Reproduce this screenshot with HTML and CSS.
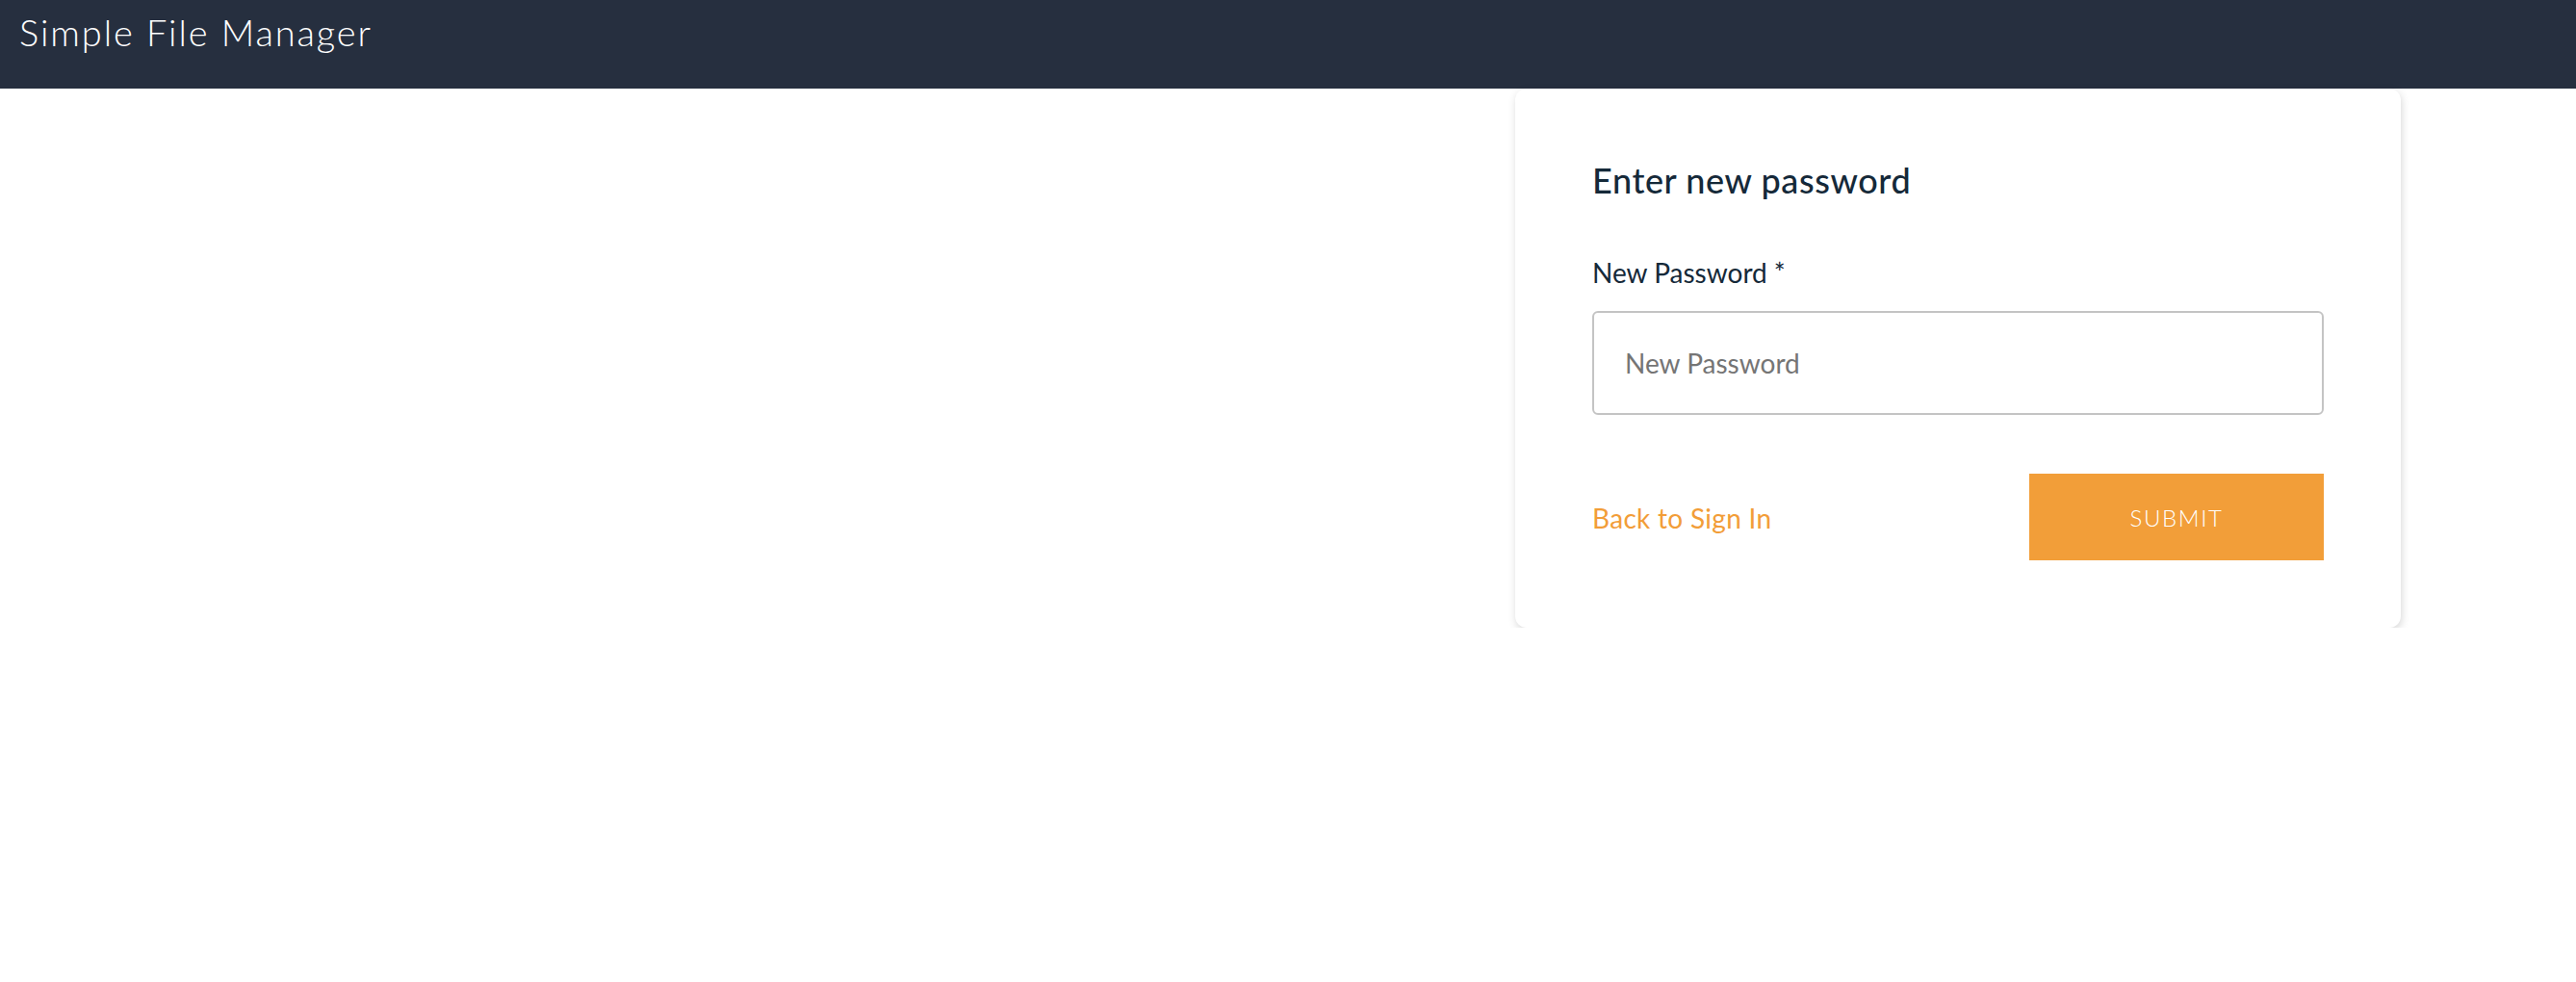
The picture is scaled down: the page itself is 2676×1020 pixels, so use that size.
FILE: index.html
```html
<!DOCTYPE html>
<html lang="en">
<head>
<meta charset="utf-8">
<title>Simple File Manager</title>
<link rel="stylesheet" href="styles.css">
</head>
<body>
<header class="topbar">
  <span class="brand">Simple File Manager</span>
</header>
<main class="main">
  <section class="card">
    <h1 class="card-title">Enter new password</h1>
    <form class="form">
      <label class="field-label" for="pw">New Password *</label>
      <input class="field-input" id="pw" type="password" placeholder="New Password">
      <div class="actions">
        <a class="back-link" href="#">Back to Sign In</a>
        <button class="submit" type="button">Submit</button>
      </div>
    </form>
  </section>
</main>
</body>
</html>
```
FILE: styles.css
```css
html, body {
  margin: 0;
  padding: 0;
  background: #ffffff;
}

body {
  font-family: Lato, "Open Sans", "Liberation Sans", sans-serif;
  color: #152939;
}

.topbar {
  height: 92px;
  box-sizing: border-box;
  background: #262f3f;
  padding: 10px 20px 0;
}

.brand {
  font-size: 38px;
  font-weight: 300;
  letter-spacing: 1.9px;
  color: #ffffff;
  line-height: normal;
}

.main {
  display: flex;
  justify-content: flex-end;
  padding-right: 182px;
}

.card {
  width: 920px;
  box-sizing: border-box;
  padding: 70px 80px;
  background: #ffffff;
  border-radius: 12px;
  box-shadow: 1px 3px 8px rgba(0, 0, 0, 0.16);
}

.card-title {
  margin: 0;
  padding-top: 3px;
  font-size: 36px;
  font-weight: 500;
  letter-spacing: 0.6px;
  line-height: normal;
  color: #152939;
}

.form {
  display: flex;
  flex-direction: column;
  margin-top: 57px;
}

.field-label {
  font-size: 28px;
  line-height: normal;
  color: #152939;
}

.field-input {
  margin-top: 23px;
  height: 108px;
  box-sizing: border-box;
  border: 2px solid #c4c4c4;
  border-radius: 6px;
  padding: 0 32px;
  font-family: inherit;
  font-size: 28px;
  color: #152939;
  outline: none;
}

.field-input::placeholder {
  color: #757575;
}

.actions {
  margin-top: 61px;
  display: flex;
  align-items: center;
  justify-content: space-between;
}

.back-link {
  font-size: 28px;
  letter-spacing: 0.3px;
  color: #f29d38;
  text-decoration: none;
  line-height: normal;
  padding-top: 2px;
}

.submit {
  width: 306px;
  height: 90px;
  border: none;
  background: #f29e39;
  color: #ffffff;
  font-family: inherit;
  font-size: 24px;
  font-weight: 300;
  letter-spacing: 1.6px;
  text-transform: uppercase;
  cursor: pointer;
}
```
